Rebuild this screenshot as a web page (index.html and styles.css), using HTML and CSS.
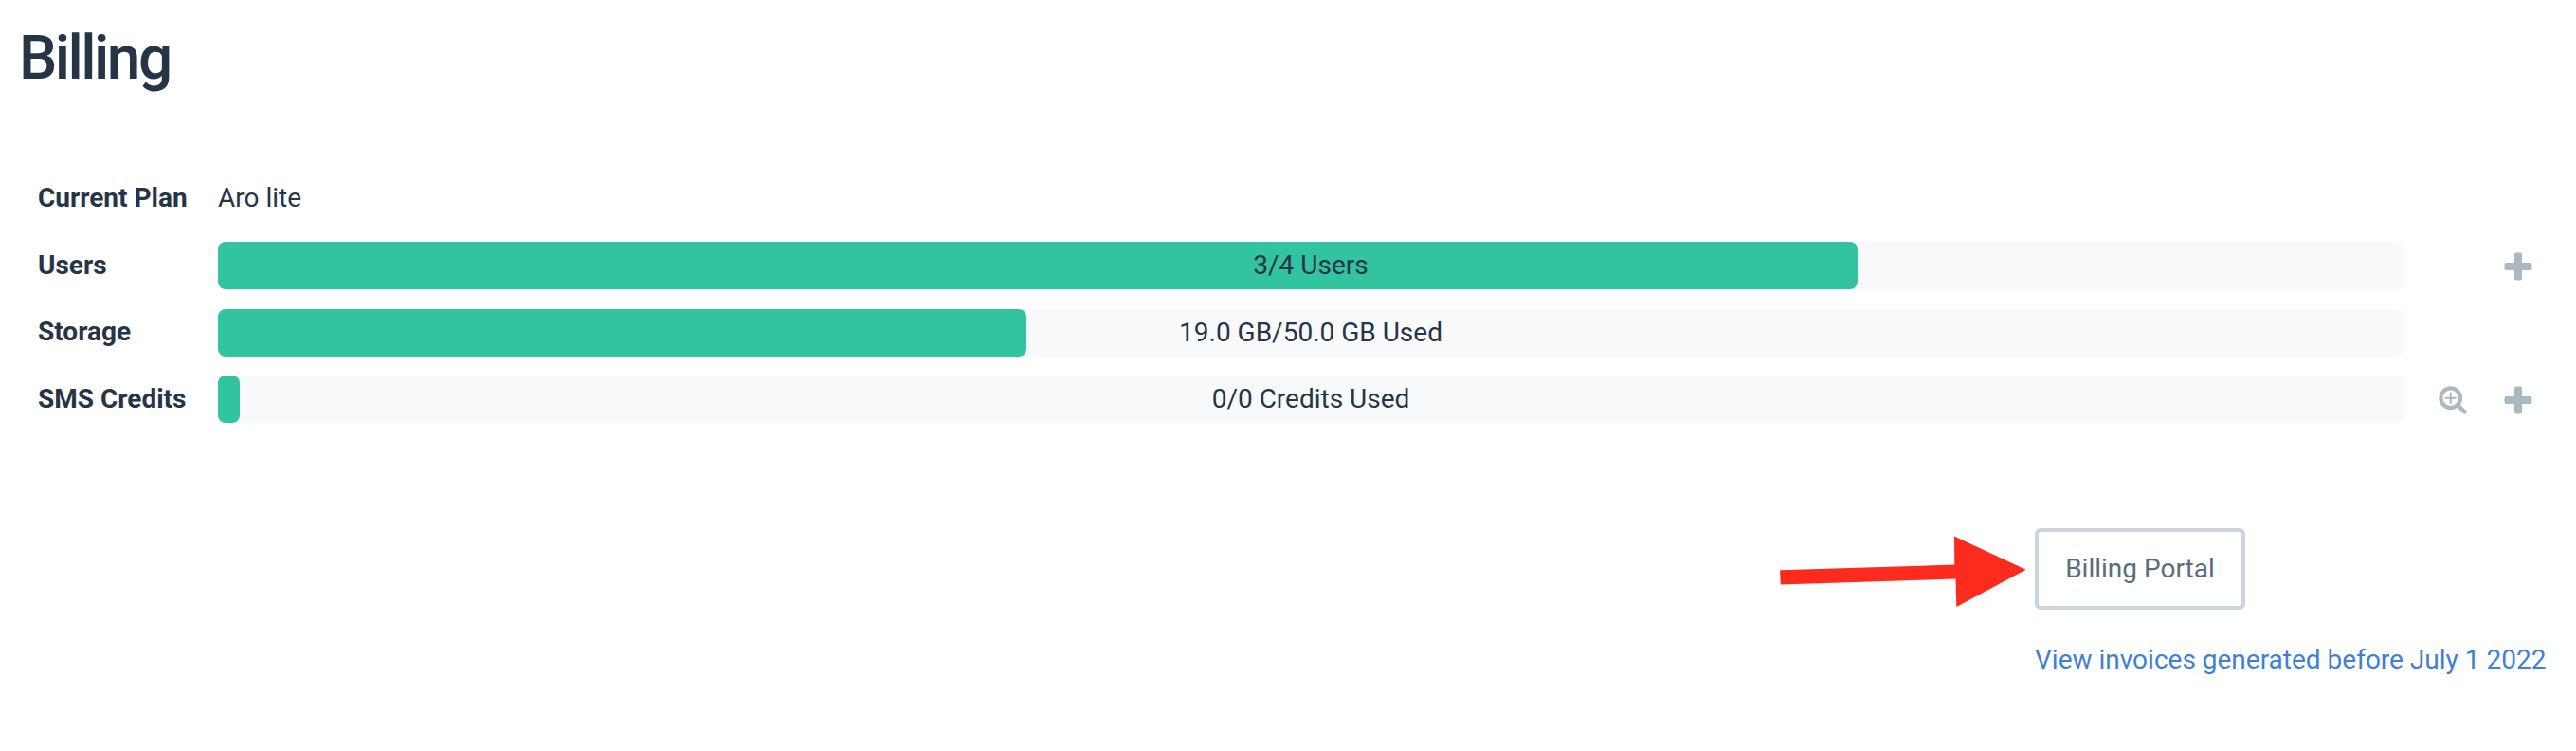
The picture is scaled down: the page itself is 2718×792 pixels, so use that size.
FILE: index.html
```html
<!DOCTYPE html>
<html lang="en">
<head>
  <meta charset="UTF-8">
  <title>Billing</title>
  <link rel="stylesheet" href="styles.css">
</head>
<body>
  <h1>Billing</h1>

  <!-- Plan usage -->
  <div class="usage">
    <div class="row">
      <div class="label">Current Plan</div>
      <div class="plan">Aro lite</div>
    </div>
    <div class="row">
      <div class="label">Users</div>
      <div class="bar">
        <div class="fill" style="width: 75%"></div>
        <span class="bar-text">3/4 Users</span>
      </div>
      <div class="actions">
        <svg class="icon" viewBox="0 0 30 30"><path d="M13 .5h4a2 2 0 0 1 2 2V11h8.500a2 2 0 0 1 2 2v4a2 2 0 0 1-2 2H19v8.500a2 2 0 0 1-2 2h-4a2 2 0 0 1-2-2V19H2.500a2 2 0 0 1-2-2v-4a2 2 0 0 1 2-2H11V2.500a2 2 0 0 1 2-2z"/></svg>
      </div>
    </div>
    <div class="row">
      <div class="label">Storage</div>
      <div class="bar">
        <div class="fill" style="width: 37%"></div>
        <span class="bar-text">19.0 GB/50.0 GB Used</span>
      </div>
    </div>
    <div class="row">
      <div class="label">SMS Credits</div>
      <div class="bar">
        <div class="fill" style="width: 1%"></div>
        <span class="bar-text">0/0 Credits Used</span>
      </div>
      <div class="actions">
        <svg class="icon zoom" viewBox="0 0 30 30">
          <circle cx="12.700" cy="12.700" r="10.300" stroke-width="4.200"/>
          <path d="M20.500 20.500l7 7" stroke-width="4.400"/>
          <path d="M12.700 7.500v10.400M7.500 12.700h10.400" stroke-width="2"/>
        </svg>
        <svg class="icon" viewBox="0 0 30 30"><path d="M13 .5h4a2 2 0 0 1 2 2V11h8.500a2 2 0 0 1 2 2v4a2 2 0 0 1-2 2H19v8.500a2 2 0 0 1-2 2h-4a2 2 0 0 1-2-2V19H2.500a2 2 0 0 1-2-2v-4a2 2 0 0 1 2-2H11V2.500a2 2 0 0 1 2-2z"/></svg>
      </div>
    </div>
  </div>

  <!-- Portal -->
  <div class="portal">
    <button>Billing Portal</button>
    <a href="#">View invoices generated before July 1 2022</a>
    <svg class="arrow" viewBox="0 0 260 76"><path d="M0 36.200L184.300 30.600 184 .600 259.600 35.800 186.300 75 185.500 45.600.800 51.500z"/></svg>
  </div>
</body>
</html>
```

FILE: styles.css
```css
body {
  font-family: Roboto, sans-serif;
  font-size: 28px;
  color: #253547;
  margin: 0;
  background: #fff;
}
h1 {
  margin: 0;
  padding: 22px 20px 0;
  height: 80px;
  line-height: 80px;
  font-size: 64px;
  font-weight: 500;
  letter-spacing: -2.560px;
}
.usage {
  display: grid;
  row-gap: 20.700px;
  padding: 82.300px 46px 0 40px;
}
.row {
  display: grid;
  grid-template-columns: 190px 2306px 1fr;
  height: 50px;
  line-height: 50px;
}
.label {
  margin-top: -0.4px;
  font-weight: 700;
}
.bar {
  position: relative;
  background: #f8f9fb;
  border-radius: 8px;
  text-align: center;
}
.fill {
  height: 50px;
  background: #32c39f;
  border-radius: 8px;
}
.bar-text {
  position: absolute;
  inset: 0;
}
.actions {
  display: flex;
  justify-content: flex-end;
  align-items: center;
  gap: 39px;
  padding-top: 2px;
}
.icon {
  width: 30px;
  height: 30px;
  fill: #a8b9c0;
}
.zoom {
  fill: none;
  stroke: #a8b9c0;
  stroke-linecap: round;
}
.portal {
  position: relative;
  display: flex;
  flex-direction: column;
  align-items: flex-start;
  gap: 35px;
  margin: 110.600px 0 0 2147px;
}
button {
  box-sizing: border-box;
  width: 222px;
  height: 86px;
  padding: 0;
  font: inherit;
  color: #5b6c7e;
  background: #fff;
  border: 4px solid #cbd5e2;
  border-radius: 6px;
}
a {
  color: #3f7fd8;
  line-height: 36px;
  text-decoration: none;
  white-space: nowrap;
}
/* points at the button */
.arrow {
  position: absolute;
  top: 8.5px;
  left: -269px;
  width: 260px;
  height: 76px;
  fill: #fc2b1e;
}
```
